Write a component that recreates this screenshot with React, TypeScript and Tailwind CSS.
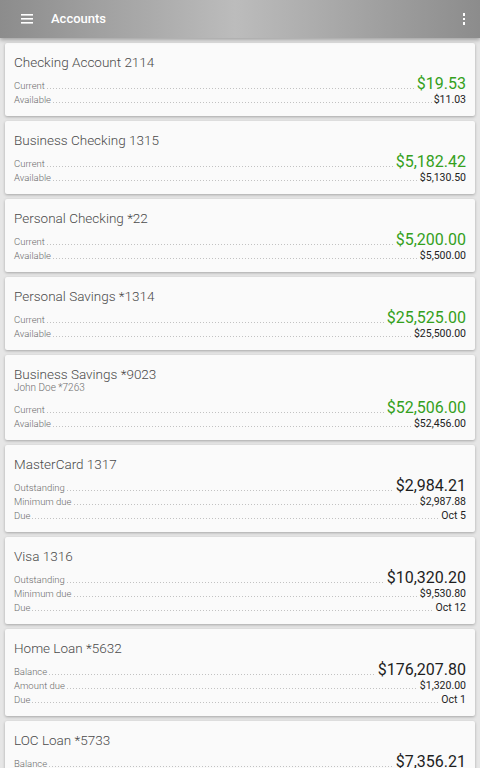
type Row = { label: string; value: string };

interface Account {
  name: string;
  sub?: string;
  main: Row;
  rows: Row[];
  green?: boolean;
}

const accounts: Account[] = [
  { name: "Checking Account 2114", main: { label: "Current", value: "$19.53" }, rows: [{ label: "Available", value: "$11.03" }], green: true },
  { name: "Business Checking 1315", main: { label: "Current", value: "$5,182.42" }, rows: [{ label: "Available", value: "$5,130.50" }], green: true },
  { name: "Personal Checking *22", main: { label: "Current", value: "$5,200.00" }, rows: [{ label: "Available", value: "$5,500.00" }], green: true },
  { name: "Personal Savings *1314", main: { label: "Current", value: "$25,525.00" }, rows: [{ label: "Available", value: "$25,500.00" }], green: true },
  { name: "Business Savings *9023", sub: "John Doe *7263", main: { label: "Current", value: "$52,506.00" }, rows: [{ label: "Available", value: "$52,456.00" }], green: true },
  {
    name: "MasterCard 1317",
    main: { label: "Outstanding", value: "$2,984.21" },
    rows: [
      { label: "Minimum due", value: "$2,987.88" },
      { label: "Due", value: "Oct 5" },
    ],
  },
  {
    name: "Visa 1316",
    main: { label: "Outstanding", value: "$10,320.20" },
    rows: [
      { label: "Minimum due", value: "$9,530.80" },
      { label: "Due", value: "Oct 12" },
    ],
  },
  {
    name: "Home Loan *5632",
    main: { label: "Balance", value: "$176,207.80" },
    rows: [
      { label: "Amount due", value: "$1,320.00" },
      { label: "Due", value: "Oct 1" },
    ],
  },
  {
    name: "LOC Loan *5733",
    main: { label: "Balance", value: "$7,356.21" },
    rows: [
      { label: "Amount due", value: "$250.00" },
      { label: "Due", value: "Oct 9" },
    ],
  },
];

// dotted leader between label and value
const Dots = () => (
  <div className="flex-1 mx-[2px] h-[1px] bg-[linear-gradient(to_right,#c2c2c2_1px,transparent_1px)] bg-[length:3px_1px]" />
);

const AccountCard = ({ account }: { account: Account }) => (
  <div className="bg-[#fafafa] rounded-[2px] shadow-[0_1px_3px_rgba(0,0,0,0.28)] pt-[11px] pb-[9px] px-[9px]">
    <div className="text-[13.5px] leading-[16px] font-light text-[#4a4a4a]">{account.name}</div>
    {account.sub && (
      <div className="text-[10px] leading-[12px] font-light text-[#6e6e6e]">{account.sub}</div>
    )}
    <div className="mt-[4px] flex items-baseline h-[19px]">
      <span className="text-[9.5px] font-light text-[#6a6a6a]">{account.main.label}</span>
      <Dots />
      <span
        className={`text-[16px] leading-[19px] ${account.green ? "text-[#34a01c]" : "text-[#1e1e1e]"}`}
      >
        {account.main.value}
      </span>
    </div>
    {account.rows.map((r) => (
      <div key={r.label} className="flex items-baseline h-[14px] leading-[14px]">
        <span className="text-[9.5px] font-light text-[#6a6a6a]">{r.label}</span>
        <Dots />
        <span className="text-[10.5px] text-[#222222]">{r.value}</span>
      </div>
    ))}
  </div>
);

export default function App() {
  return (
    <div
      className="w-[480px] h-[768px] overflow-hidden bg-[#e6e6e6]"
      style={{ fontFamily: "Roboto, 'Liberation Sans', sans-serif" }}
    >
      <header className="relative z-10 h-[38px] flex items-center bg-[linear-gradient(to_right,#8c8c8c,#bcbcbc_49%,#8c8c8c)] shadow-[0_2px_4px_rgba(0,0,0,0.3)]">
        <div className="w-[51px] flex justify-center pl-[2px]">
          <svg width="12" height="10" viewBox="0 0 12 10">
            <rect x="0" y="0" width="12" height="1.6" fill="#fff" />
            <rect x="0" y="4" width="12" height="1.6" fill="#fff" />
            <rect x="0" y="8" width="12" height="1.6" fill="#fff" />
          </svg>
        </div>
        <span className="text-white text-[13px] font-medium">Accounts</span>
        <div className="ml-auto mr-[15px] flex flex-col gap-[2px]">
          <span className="w-[2.5px] h-[2.5px] bg-white" />
          <span className="w-[2.5px] h-[2.5px] bg-white" />
          <span className="w-[2.5px] h-[2.5px] bg-white" />
        </div>
      </header>
      <main className="flex flex-col gap-[5px] px-[5px] pt-[5px]">
        {accounts.map((a) => (
          <AccountCard key={a.name} account={a} />
        ))}
      </main>
    </div>
  );
}
